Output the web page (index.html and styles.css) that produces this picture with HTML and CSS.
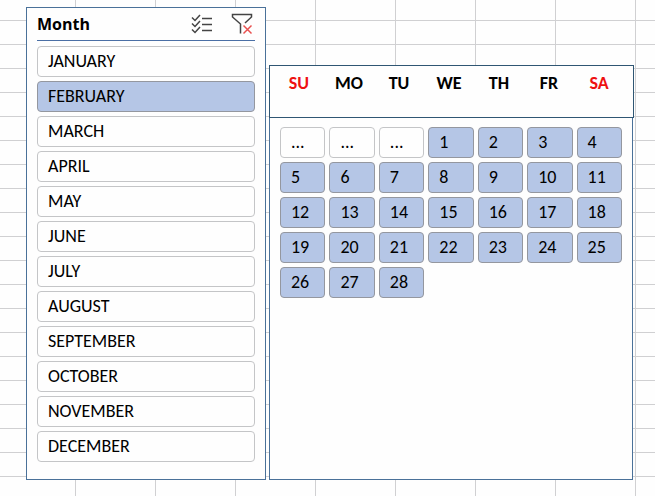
FILE: index.html
```html
<!DOCTYPE html>
<html lang="en">
<head>
    <meta charset="UTF-8">
    <meta name="viewport" content="width=device-width, initial-scale=1.0">
    <title>Month Calendar</title>
    <link rel="stylesheet" href="styles.css">
</head>
<body>
    <main class="sheet">
        <section class="slicer months">
            <header class="slicer-header">
                <h2>Month</h2>
                <button class="icon-btn" type="button" aria-label="Multi-select">
                    <svg width="22" height="20" viewBox="0 0 22 20" fill="none" stroke="#444" stroke-width="1.5">
                        <path d="M1 3.500l3 3 5-5.500M1 9.500l3 3 5-5.500M1 15.500l3 3 5-5.500M11 4.500h10M11 10.500h10M11 16.500h10"/>
                    </svg>
                </button>
                <button class="icon-btn" type="button" aria-label="Clear filter">
                    <svg width="22" height="22" viewBox="0 0 22 22" fill="none" stroke="#444" stroke-width="1.5">
                        <path d="M9.500 20.500v-9.500L1.500 4V1.500h19V4l-6.500 6"/>
                        <path d="M12.500 12.500l8 8M20.500 12.500l-8 8" stroke="#e8504f"/>
                    </svg>
                </button>
            </header>
            <div class="month-list">
                <button class="item" type="button">JANUARY</button>
                <button class="item selected" type="button">FEBRUARY</button>
                <button class="item" type="button">MARCH</button>
                <button class="item" type="button">APRIL</button>
                <button class="item" type="button">MAY</button>
                <button class="item" type="button">JUNE</button>
                <button class="item" type="button">JULY</button>
                <button class="item" type="button">AUGUST</button>
                <button class="item" type="button">SEPTEMBER</button>
                <button class="item" type="button">OCTOBER</button>
                <button class="item" type="button">NOVEMBER</button>
                <button class="item" type="button">DECEMBER</button>
            </div>
        </section>

        <section class="slicer calendar">
            <div class="weekdays">
                <span class="weekend">SU</span>
                <span>MO</span>
                <span>TU</span>
                <span>WE</span>
                <span>TH</span>
                <span>FR</span>
                <span class="weekend">SA</span>
            </div>
            <div class="days">
                <button class="item" type="button">...</button>
                <button class="item" type="button">...</button>
                <button class="item" type="button">...</button>
                <button class="item selected" type="button">1</button>
                <button class="item selected" type="button">2</button>
                <button class="item selected" type="button">3</button>
                <button class="item selected" type="button">4</button>
                <button class="item selected" type="button">5</button>
                <button class="item selected" type="button">6</button>
                <button class="item selected" type="button">7</button>
                <button class="item selected" type="button">8</button>
                <button class="item selected" type="button">9</button>
                <button class="item selected" type="button">10</button>
                <button class="item selected" type="button">11</button>
                <button class="item selected" type="button">12</button>
                <button class="item selected" type="button">13</button>
                <button class="item selected" type="button">14</button>
                <button class="item selected" type="button">15</button>
                <button class="item selected" type="button">16</button>
                <button class="item selected" type="button">17</button>
                <button class="item selected" type="button">18</button>
                <button class="item selected" type="button">19</button>
                <button class="item selected" type="button">20</button>
                <button class="item selected" type="button">21</button>
                <button class="item selected" type="button">22</button>
                <button class="item selected" type="button">23</button>
                <button class="item selected" type="button">24</button>
                <button class="item selected" type="button">25</button>
                <button class="item selected" type="button">26</button>
                <button class="item selected" type="button">27</button>
                <button class="item selected" type="button">28</button>
            </div>
        </section>
    </main>
</body>
</html>
```

FILE: styles.css
```css
* {
    box-sizing: border-box;
}
body {
    margin: 0;
    min-height: 100vh;
    font-family: Carlito, Lato, sans-serif;
    font-size: 18px;
    color: #000;
    /* worksheet gridlines */
    background-color: #fefefe;
    background-image:
        linear-gradient(to right, #d0d0d2 1px, transparent 1px),
        linear-gradient(to bottom, #d0d0d2 1px, transparent 1px);
    background-size: 80px 24px;
    background-position: 75px 20px;
}
.sheet {
    display: grid;
    grid-template-columns: 240fr 364fr;
    gap: 3px;
    padding: 7px 22px 16px 26px;
}
.slicer {
    background: #fefefe;
    border: 1px solid #4a7199;
}
.months {
    padding: 0 10px 17px;
}
.slicer-header {
    display: flex;
    align-items: center;
    gap: 18px;
    height: 33px;
    margin-bottom: 5px;
    border-bottom: 1px solid #4a6fa5;
}
.slicer-header h2 {
    flex: 1;
    margin: 0;
    font-family: "Open Sans", sans-serif;
    font-size: 16px;
    font-weight: bold;
}
.icon-btn {
    display: flex;
    padding: 0;
    border: none;
    background: none;
    cursor: pointer;
}
.icon-btn:last-child {
    margin-right: 2px;
}
.month-list {
    display: grid;
    gap: 4px;
}
.item {
    padding: 0 10px;
    border: 1px solid #c4c5c7;
    border-radius: 4px;
    background: #fefefe;
    color: #000;
    font-family: inherit;
    font-size: 18px;
    line-height: 29px;
    text-align: left;
    cursor: pointer;
}
.item.selected {
    background: #b5c6e6;
    border-color: #94979f;
}
.calendar {
    margin-top: 58px;
}
.weekdays {
    display: grid;
    grid-template-columns: repeat(7, 1fr);
    height: 53px;
    /* the header box overlaps the slicer frame */
    margin: -1px -2px 0 -1px;
    padding: 6px 9px 0 4px;
    border: 1px solid #2f5673;
    background: #fefefe;
    font-weight: bold;
    line-height: 22px;
    text-align: center;
}
.weekend {
    color: #ee1111;
}
.days {
    display: grid;
    grid-template-columns: repeat(7, 1fr);
    gap: 4px;
    padding: 9px 10px;
}
```
